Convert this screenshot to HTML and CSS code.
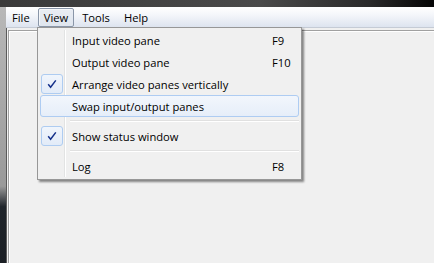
FILE: index.html
```html
<!DOCTYPE html>
<html lang="en">
<head>
  <meta charset="UTF-8" />
  <title>View menu</title>
  <link rel="stylesheet" href="styles.css">
</head>
<body>
  <div class="titlebar"></div>

  <div class="frame">
    <div class="frame-left"></div>

    <div class="window">
      <nav class="menubar">
        <span class="menu-item">File</span>
        <span class="menu-item open">View</span>
        <span class="menu-item">Tools</span>
        <span class="menu-item">Help</span>
      </nav>

      <div class="client">
        <div class="pane"></div>
      </div>
    </div>
  </div>

  <div class="dropdown">
    <div class="gutter"></div>

    <div class="entry">
      <span class="mark"></span>
      <span class="label">Input video pane</span>
      <span class="key">F9</span>
    </div>
    <div class="entry">
      <span class="mark"></span>
      <span class="label">Output video pane</span>
      <span class="key">F10</span>
    </div>
    <div class="entry">
      <span class="mark checked">
        <svg width="10" height="10" viewBox="0 0 10 10"><path d="M1.2 5.2 L3.6 8.2 L8.8 1.4" fill="none" stroke="#14308a" stroke-width="1.5"/></svg>
      </span>
      <span class="label">Arrange video panes vertically</span>
      <span class="key"></span>
    </div>
    <div class="entry hover">
      <span class="mark"></span>
      <span class="label">Swap input/output panes</span>
      <span class="key"></span>
    </div>

    <div class="sep"></div>

    <div class="entry">
      <span class="mark checked">
        <svg width="10" height="10" viewBox="0 0 10 10"><path d="M1.2 5.2 L3.6 8.2 L8.8 1.4" fill="none" stroke="#14308a" stroke-width="1.5"/></svg>
      </span>
      <span class="label">Show status window</span>
      <span class="key"></span>
    </div>

    <div class="sep"></div>

    <div class="entry">
      <span class="mark"></span>
      <span class="label">Log</span>
      <span class="key">F8</span>
    </div>
  </div>
</body>
</html>
```

FILE: styles.css
```css
html, body {
  margin: 0;
  padding: 0;
}
body {
  width: 434px;
  height: 263px;
  overflow: hidden;
  background: #f0f0f0;
  font-family: 'Open Sans', 'Noto Sans', sans-serif;
  font-size: 11.2px;
  color: #000;
  position: relative;
}
.titlebar {
  height: 7px;
  background: linear-gradient(to right, #3a3a3a, #4a4a4a 60%, #2a2a2a 85%, #050505);
}
.frame {
  display: flex;
  height: 256px;
}
.frame-left {
  width: 6px;
  background: linear-gradient(to bottom, #b8b8b8, #9a9a9a 70%, #20252b 78%, #1b1f24);
  border-right: 1px solid #5a5a5a;
}
.window {
  flex: 1;
  display: flex;
  flex-direction: column;
}
.menubar {
  height: 19px;
  padding: 1px 0 0 0;
  margin-left: -1px;
  display: flex;
  align-items: center;
  gap: 2px;
  background: linear-gradient(to bottom, #ffffff, #f4f6fa 40%, #dde4ef);
  border-bottom: 1px solid #c5cbd5;
}
.menu-item {
  padding: 0 5px;
  height: 17px;
  line-height: 17px;
  border: 1px solid transparent;
  border-radius: 2px;
}
.menu-item.open {
  border-color: #8a96a8;
  background: linear-gradient(to bottom, #e9edf3, #dfe5ee);
  box-shadow: inset 1px 1px 0 rgba(255, 255, 255, 0.6);
}
.client {
  flex: 1;
  padding: 2px 0 0 1px;
}
.pane {
  height: 100%;
  border-top: 1px solid #a0a0a0;
  border-left: 1px solid #a0a0a0;
  box-shadow: inset 1px 1px 0 #ffffff;
}

/* the open View menu lies over the window */
.dropdown {
  position: absolute;
  left: 37px;
  top: 27px;
  width: 259px;
  padding: 1px 2px 2px;
  background: #f0f0f0;
  border: 1px solid #979797;
  box-shadow: 2px 2px 2px rgba(0, 0, 0, 0.45);
}
.gutter {
  position: absolute;
  top: 2px;
  bottom: 2px;
  left: 26px;
  width: 1px;
  background: #e2e3e3;
  border-right: 1px solid #ffffff;
}
.entry {
  position: relative;
  display: flex;
  align-items: center;
  height: 20px;
  border: 1px solid transparent;
  border-radius: 3px;
}
.entry.hover {
  border-color: #aeccf2;
  background: linear-gradient(to bottom, #f2f6fc, #e6eef9);
}
.mark {
  box-sizing: border-box;
  width: 22px;
  height: 20px;
  margin-right: 9px;
  display: flex;
  align-items: center;
  justify-content: center;
}
.mark.checked {
  border: 1px solid #aeccf1;
  border-radius: 3px;
  background: linear-gradient(to bottom, #f0f5fc, #e2ebf8);
}
.label {
  flex: 1;
}
.key {
  width: 26px;
}
.sep {
  height: 1px;
  margin: 3px 0 3px 30px;
  background: #e0e0e0;
  border-bottom: 1px solid #ffffff;
}
```
